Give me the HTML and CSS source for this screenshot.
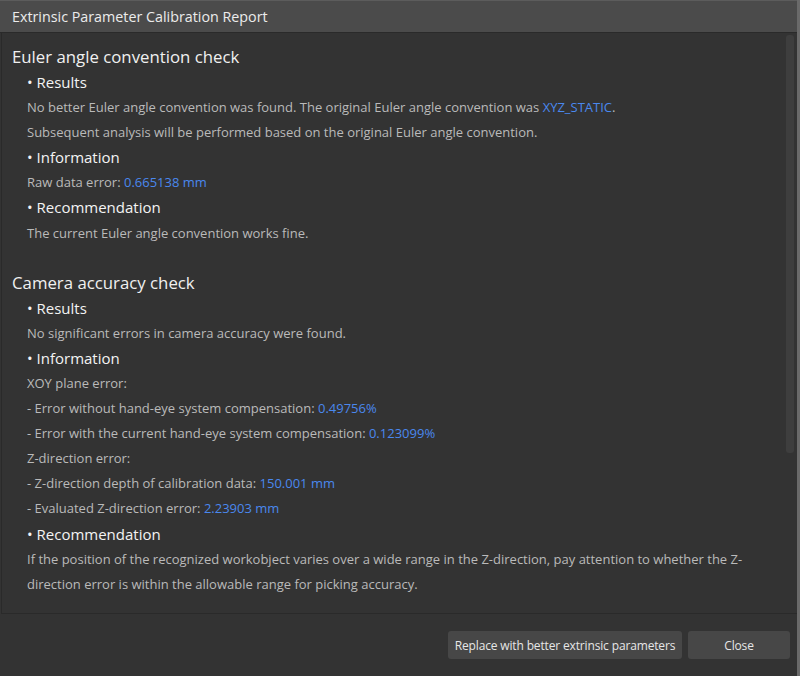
FILE: index.html
```html
<!DOCTYPE html>
<html lang="en">
<head>
<meta charset="utf-8">
<title>Extrinsic Parameter Calibration Report</title>
<link rel="stylesheet" href="styles.css">
</head>
<body>
<div class="window">
  <div class="titlebar">Extrinsic Parameter Calibration Report</div>
  <div class="panel">
    <div class="content">
      <section class="section">
        <h2 class="h1">Euler angle convention check</h2>
        <h3 class="h2">• Results</h3>
        <p class="line">No better Euler angle convention was found. The original Euler angle convention was <span class="val">XYZ_STATIC</span>.</p>
        <p class="line">Subsequent analysis will be performed based on the original Euler angle convention.</p>
        <h3 class="h2">• Information</h3>
        <p class="line">Raw data error: <span class="val">0.665138 mm</span></p>
        <h3 class="h2">• Recommendation</h3>
        <p class="line">The current Euler angle convention works fine.</p>
      </section>
      <section class="section">
        <h2 class="h1">Camera accuracy check</h2>
        <h3 class="h2">• Results</h3>
        <p class="line">No significant errors in camera accuracy were found.</p>
        <h3 class="h2">• Information</h3>
        <p class="line">XOY plane error:</p>
        <p class="line">- Error without hand-eye system compensation: <span class="val">0.49756%</span></p>
        <p class="line">- Error with the current hand-eye system compensation: <span class="val">0.123099%</span></p>
        <p class="line">Z-direction error:</p>
        <p class="line">- Z-direction depth of calibration data: <span class="val">150.001 mm</span></p>
        <p class="line">- Evaluated Z-direction error: <span class="val">2.23903 mm</span></p>
        <h3 class="h2">• Recommendation</h3>
        <p class="line">If the position of the recognized workobject varies over a wide range in the Z-direction, pay attention to whether the Z-<br>direction error is within the allowable range for picking accuracy.</p>
      </section>
    </div>
    <div class="scroll-thumb"></div>
  </div>
  <div class="footer">
    <button class="btn btn-wide">Replace with better extrinsic parameters</button>
    <button class="btn btn-close">Close</button>
  </div>
</div>
</body>
</html>
```
FILE: styles.css
```css
html, body {
  margin: 0;
  padding: 0;
  background: #2b2b2b;
}
body {
  font-family: "Open Sans", "Noto Sans", "Liberation Sans", sans-serif;
  width: 800px;
  height: 676px;
  overflow: hidden;
}
.window {
  width: 797px;
  height: 676px;
  background: #333333;
  border-right: 3px solid #6a6a6a;
  display: flex;
  flex-direction: column;
}
.titlebar {
  height: 33px;
  box-sizing: border-box;
  background: #4b4b4b;
  border-top: 1px solid #5c5c5c;
  border-bottom: 1px solid #2a2a2a;
  color: #ececec;
  font-size: 14.3px;
  line-height: 32px;
  padding-left: 12px;
  flex: none;
}
.panel {
  position: relative;
  height: 580px;
  margin-left: 1px;
  border-left: 1px solid #2a2a2a;
  border-bottom: 1px solid #2a2a2a;
  overflow: hidden;
  flex: none;
}
.content {
  padding: 11px 0 0 10px;
  width: 760px;
}
.section + .section {
  margin-top: 24px;
}
.h1 {
  margin: 0;
  font-size: 16.8px;
  font-weight: normal;
  color: #f0f0f0;
  line-height: 26px;
}
.h2 {
  margin: 0;
  padding-left: 15px;
  font-size: 15px;
  font-weight: normal;
  color: #f4f4f4;
  line-height: 25.1px;
}
.line {
  margin: 0;
  padding-left: 15px;
  font-size: 13px;
  color: #bababa;
  line-height: 25.1px;
}
.val {
  color: #4a88ee;
}
.scroll-thumb {
  position: absolute;
  top: 2px;
  right: 3px;
  width: 8px;
  height: 418px;
  border-radius: 3px;
  background: #3e3e3e;
}
.footer {
  flex: 1;
  display: flex;
  justify-content: flex-end;
  align-items: flex-start;
  gap: 6px;
  padding: 17px 7px 0 0;
}
.btn {
  height: 28px;
  border: none;
  border-radius: 3px;
  background: #474747;
  color: #e6e6e6;
  font-family: "Open Sans", "Noto Sans", "Liberation Sans", sans-serif;
  font-size: 12px;
  letter-spacing: -0.15px;
  padding: 0;
  white-space: nowrap;
}
.btn-wide {
  width: 234px;
}
.btn-close {
  width: 102px;
}
```
